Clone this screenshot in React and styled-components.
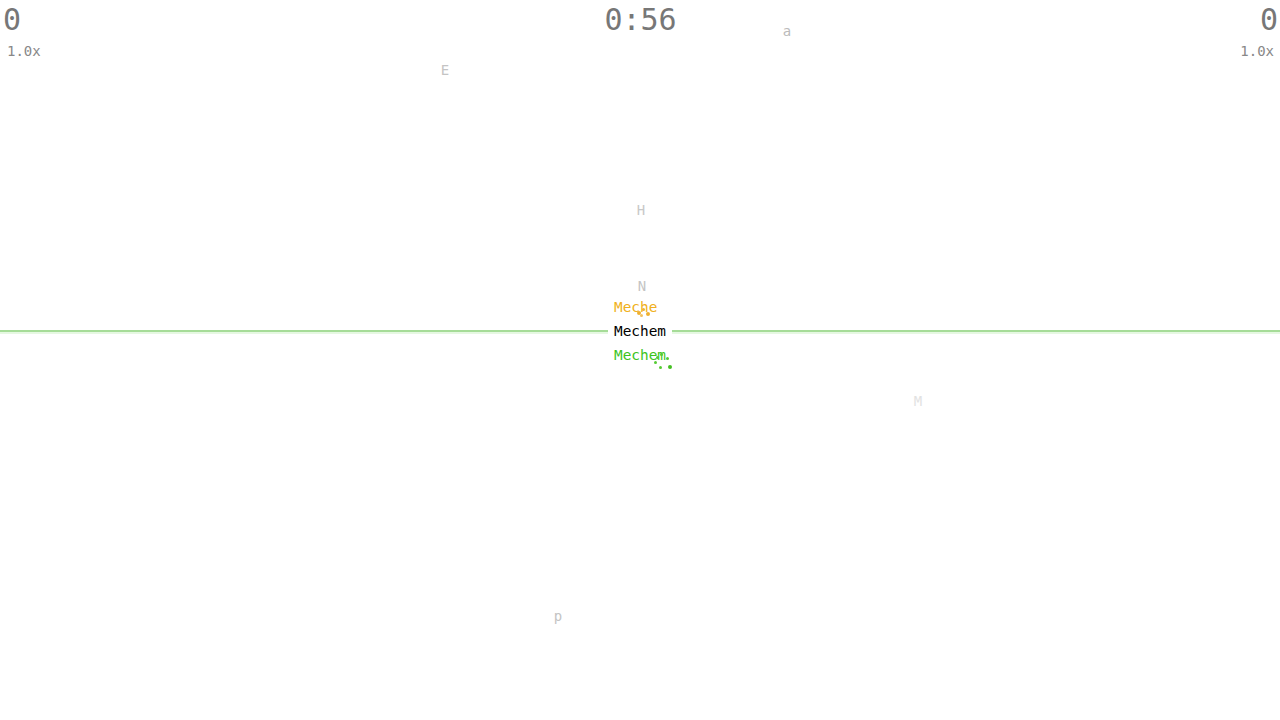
import React from 'react';
import styled, { createGlobalStyle } from 'styled-components';

const GlobalStyle = createGlobalStyle`
  html, body {
    margin: 0;
    padding: 0;
    background: #fff;
  }
  body {
    font-family: "DejaVu Sans Mono", monospace;
    overflow: hidden;
  }
`;

const Stage = styled.div`
  position: relative;
  width: 1280px;
  height: 720px;
  overflow: hidden;
`;

const Hud = styled.div`
  display: grid;
  grid-template-columns: 1fr auto 1fr;
  align-items: start;
  padding: 0 2px 0 3px;
`;

const Side = styled.div`
  display: flex;
  flex-direction: column;
  align-items: ${(p) => (p.$right ? 'flex-end' : 'flex-start')};
`;

const Score = styled.div`
  font-size: 30px;
  line-height: 40px;
  color: #777;
`;

const Speed = styled.div`
  font-size: 14px;
  line-height: 20px;
  color: #888;
  margin-top: 1px;
  padding: ${(p) => (p.$right ? '0 4px 0 0' : '0 0 0 4px')};
`;

const Clock = styled.div`
  font-size: 30px;
  line-height: 40px;
  color: #777;
`;

const Letter = styled.span`
  position: absolute;
  font-size: 14px;
  line-height: 16px;
  color: ${(p) => p.$color};
  transform: translate(-50%, -50%);
`;

const Lane = styled.div`
  position: absolute;
  left: 0;
  right: 0;
  top: 319px;
  height: 24px;
  display: flex;
  align-items: center;
  justify-content: center;
  &::before {
    content: '';
    position: absolute;
    left: 0;
    right: 0;
    top: 11px;
    height: 2px;
    background: #a6dc98;
  }
  &::after {
    content: '';
    position: absolute;
    left: 0;
    right: 0;
    top: 13px;
    height: 2px;
    background: #e6f8e2;
  }
`;

const Word = styled.div`
  position: relative;
  z-index: 1;
  background: #fff;
  padding: 0 6px;
  font-size: 14.4px;
  line-height: 24px;
  color: ${(p) => p.$color};
`;

const Ghost = styled.div`
  position: absolute;
  left: 614px;
  top: ${(p) => p.$top}px;
  font-size: 14.4px;
  line-height: 18px;
  color: ${(p) => p.$color};
`;

const Dot = styled.span`
  position: absolute;
  width: ${(p) => p.$s}px;
  height: ${(p) => p.$s}px;
  border-radius: 50%;
  background: ${(p) => p.$color};
`;

const letters = [
  { ch: 'a', x: 787, y: 31, c: '#bbb' },
  { ch: 'E', x: 445, y: 70, c: '#c4c4c4' },
  { ch: 'H', x: 641, y: 210, c: '#c8c8c8' },
  { ch: 'N', x: 642, y: 286, c: '#c4c4c4' },
  { ch: 'M', x: 918, y: 401, c: '#e2e2e2' },
  { ch: 'p', x: 558, y: 616, c: '#c4c4c4' },
];

const dots = [
  { x: 637, y: 311, s: 4, c: '#f0b030' },
  { x: 642, y: 308, s: 3, c: '#f0b030' },
  { x: 646, y: 312, s: 4, c: '#f0b030' },
  { x: 640, y: 314, s: 3, c: '#f3c060' },
  { x: 656, y: 356, s: 3, c: '#55cc33' },
  { x: 660, y: 353, s: 3, c: '#55cc33' },
  { x: 666, y: 357, s: 3, c: '#55cc33' },
  { x: 654, y: 361, s: 3, c: '#55cc33' },
  { x: 659, y: 366, s: 3, c: '#55cc33' },
  { x: 668, y: 365, s: 4, c: '#44c022' },
];

export default function App() {
  return (
    <Stage>
      <GlobalStyle />
      <Hud>
        <Side>
          <Score>0</Score>
          <Speed>1.0x</Speed>
        </Side>
        <Clock>0:56</Clock>
        <Side $right>
          <Score>0</Score>
          <Speed $right>1.0x</Speed>
        </Side>
      </Hud>

      {letters.map((l, i) => (
        <Letter key={i} $color={l.c} style={{ left: l.x, top: l.y }}>
          {l.ch}
        </Letter>
      ))}

      <Ghost $top={298} $color="#f0b020">Meche</Ghost>
      <Lane>
        <Word $color="#000">Mechem</Word>
      </Lane>
      <Ghost $top={346} $color="#3cc41c">Mechem</Ghost>

      {dots.map((d, i) => (
        <Dot key={i} $s={d.s} $color={d.c} style={{ left: d.x, top: d.y }} />
      ))}
    </Stage>
  );
}
